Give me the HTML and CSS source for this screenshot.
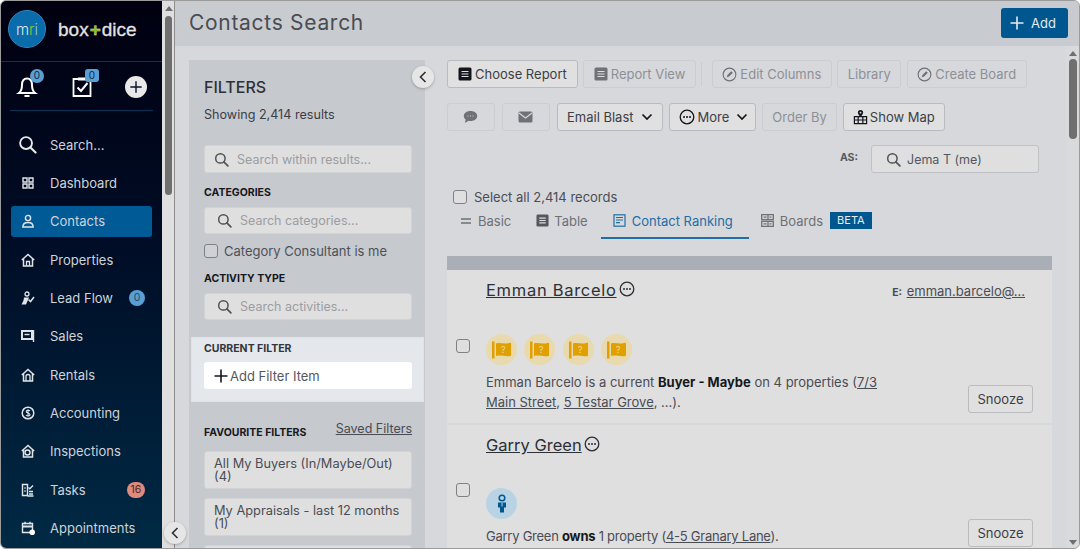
FILE: index.html
```html
<!DOCTYPE html>
<html lang="en">
<head>
  <meta charset="UTF-8">
  <title>Contacts Search</title>
  <link rel="stylesheet" href="styles.css">
</head>
<body>

  <svg class="sprite" xmlns="http://www.w3.org/2000/svg">
    <symbol id="i-search" viewBox="0 0 16 16"><circle cx="6.8" cy="6.8" r="5" fill="none" stroke="currentColor" stroke-width="1.6"/><path d="M10.5 10.5l4.3 4.3" stroke="currentColor" stroke-width="1.8" stroke-linecap="round"/></symbol>
    <symbol id="i-plus" viewBox="0 0 16 16"><path d="M8 1.5v13M1.5 8h13" stroke="currentColor" stroke-width="1.6"/></symbol>
    <symbol id="i-report" viewBox="0 0 14 14"><rect x="0.5" y="0.5" width="13" height="13" rx="1.5" fill="currentColor"/><path d="M3.5 4.500h7M3.5 7h7M3.5 9.500h7" stroke="#dcdde0" stroke-width="1.2"/></symbol>
    <symbol id="i-edit" viewBox="0 0 16 16"><circle cx="8" cy="8" r="6.8" fill="none" stroke="currentColor" stroke-width="1.2"/><path d="M5 11l.8-2.600 4-4 1.800 1.800-4 4z" fill="currentColor"/></symbol>
    <symbol id="i-more" viewBox="0 0 16 16"><circle cx="8" cy="8" r="6.800" fill="none" stroke="currentColor" stroke-width="1.300"/><circle cx="5" cy="8" r="1" fill="currentColor"/><circle cx="8" cy="8" r="1" fill="currentColor"/><circle cx="11" cy="8" r="1" fill="currentColor"/></symbol>
    <symbol id="i-chevron" viewBox="0 0 12 8"><path d="M1.500 1.500L6 6l4.500-4.500" fill="none" stroke="currentColor" stroke-width="1.700"/></symbol>
    <symbol id="i-back" viewBox="0 0 8 12"><path d="M6.500 1L1.500 6l5 5" fill="none" stroke="currentColor" stroke-width="1.600"/></symbol>
    <symbol id="i-flag" viewBox="0 0 19 18"><rect x="0" y="0.500" width="2.500" height="17" fill="currentColor"/><path d="M4 2.500c4-1.500 8 1 13-.5l2-.3v13c-5 1.500-9-1-15 .3z" fill="currentColor"/><text x="11.300" y="12" font-size="9.500" fill="#f0d890" text-anchor="middle" font-family="Inter, sans-serif">?</text></symbol>
  </svg>

  <div class="window">

    <aside class="sidebar">
      <div class="brand">
        <div class="brand-logo">m<span class="brand-r">r</span><span class="brand-i">i</span></div>
        <div class="brand-name">box<span class="brand-plus">+</span>dice</div>
      </div>

      <div class="quick">
        <div class="quick-item">
          <svg class="quick-icon" viewBox="0 0 24 24"><path d="M12 3.500c-3.500 0-5 3-5 6.500 0 4.500-1 6.500-3 8h16c-2-1.500-3-3.500-3-8 0-3.500-1.500-6.500-5-6.500z" fill="none" stroke="#fff" stroke-width="2"/><path d="M9.500 21h5" stroke="#fff" stroke-width="2"/></svg>
          <span class="quick-badge round">0</span>
        </div>
        <div class="quick-item">
          <svg class="quick-icon" viewBox="0 0 24 24"><path d="M8 4H3.500v17h17V4H16" fill="none" stroke="#fff" stroke-width="1.800"/><path d="M7.500 12.500l3.500 3.500 6.500-8" fill="none" stroke="#fff" stroke-width="2"/><rect x="8" y="2.500" width="8" height="3" fill="#fff"/></svg>
          <span class="quick-badge">0</span>
        </div>
        <div class="quick-add">
          <svg width="14" height="14"><use href="#i-plus"/></svg>
        </div>
      </div>

      <nav class="nav">
        <a class="nav-item">
          <svg class="nav-search" viewBox="0 0 16 16"><use href="#i-search"/></svg>
          <span>Search...</span>
        </a>
        <a class="nav-item">
          <svg class="nav-icon" viewBox="0 0 14 14"><path d="M2 2h4v4H2zM8 2h4v4H8zM2 8h4v4H2zM8 8h4v4H8z" fill="none" stroke="currentColor" stroke-width="1.400"/></svg>
          <span>Dashboard</span>
        </a>
        <a class="nav-item active">
          <svg class="nav-icon" viewBox="0 0 14 14"><circle cx="7" cy="4" r="2.600" fill="none" stroke="currentColor" stroke-width="1.400"/><path d="M1.800 13c0-3.200 1.600-4.500 5.200-4.500s5.200 1.300 5.200 4.500z" fill="none" stroke="currentColor" stroke-width="1.400"/></svg>
          <span>Contacts</span>
        </a>
        <a class="nav-item">
          <svg class="nav-icon" viewBox="0 0 14 14"><path d="M.8 7L7 1.500 13.200 7M2.500 6v7h9V6" fill="none" stroke="currentColor" stroke-width="1.500"/><path d="M5.500 13V8.500h3V13" fill="none" stroke="currentColor" stroke-width="1.300"/></svg>
          <span>Properties</span>
        </a>
        <a class="nav-item">
          <svg class="nav-icon" viewBox="0 0 14 14"><circle cx="6" cy="3" r="2" fill="none" stroke="currentColor" stroke-width="1.300"/><path d="M3 6.500h5L6.500 10 5 13.500H.5L2.500 9.500z" fill="currentColor"/><path d="M7.500 8.500l2 2 3.500-4.500" fill="none" stroke="currentColor" stroke-width="1.500"/></svg>
          <span>Lead Flow</span>
          <b class="nav-count blue">0</b>
        </a>
        <a class="nav-item">
          <svg class="nav-icon" viewBox="0 0 14 14"><path d="M1 2h10v8H1z" fill="none" stroke="currentColor" stroke-width="2"/><path d="M12.500 1v12" stroke="currentColor" stroke-width="1.400"/><path d="M3.500 5.500h5" stroke="currentColor" stroke-width="1.400"/></svg>
          <span>Sales</span>
        </a>
        <a class="nav-item">
          <svg class="nav-icon" viewBox="0 0 14 14"><path d="M.8 7L7 1.500 13.200 7M2.500 6v7h9V6" fill="none" stroke="currentColor" stroke-width="1.500"/><path d="M5 13V8.500a2 2 0 0 1 4 0V13" fill="none" stroke="currentColor" stroke-width="1.300"/></svg>
          <span>Rentals</span>
        </a>
        <a class="nav-item">
          <svg class="nav-icon" viewBox="0 0 14 14"><circle cx="7" cy="7" r="5.800" fill="none" stroke="currentColor" stroke-width="1.500"/><path d="M9 5c-.5-1-3.800-1.200-3.800.5S9 7 9 8.700 5.500 10 5 9M7 3.200v7.600" fill="none" stroke="currentColor" stroke-width="1.100"/></svg>
          <span>Accounting</span>
        </a>
        <a class="nav-item">
          <svg class="nav-icon" viewBox="0 0 14 14"><path d="M.8 7L7 1.500 13.200 7M2.500 6v7h9V6" fill="none" stroke="currentColor" stroke-width="1.500"/><circle cx="6.500" cy="8.500" r="2.500" fill="none" stroke="currentColor" stroke-width="1.400"/></svg>
          <span>Inspections</span>
        </a>
        <a class="nav-item">
          <svg class="nav-icon" viewBox="0 0 14 14"><path d="M1.500 1.500h5v11h-5z" fill="none" stroke="currentColor" stroke-width="1.400"/><path d="M6.500 13h6M7.500 4.500l1.300 1.300L12 2.500M8 8.500h4M8 11h4" fill="none" stroke="currentColor" stroke-width="1.300"/><path d="M3 5h2M3 8h2" stroke="currentColor" stroke-width="1.200"/></svg>
          <span>Tasks</span>
          <b class="nav-count red">16</b>
        </a>
        <a class="nav-item">
          <svg class="nav-icon" viewBox="0 0 14 14"><path d="M1.500 2.500h10v9h-10z" fill="none" stroke="currentColor" stroke-width="1.400"/><path d="M1.500 5.500h10" stroke="currentColor" stroke-width="1.800"/><path d="M4 .8v2.400M9 .8v2.400" stroke="currentColor" stroke-width="1.400"/><circle cx="11.200" cy="11.200" r="2.800" fill="#fff"/></svg>
          <span>Appointments</span>
        </a>
      </nav>
    </aside>

    <div class="side-scroll">
      <div class="arrow-up"></div>
      <div class="side-thumb"></div>
    </div>

    <main class="main">
      <header class="topbar">
        <h1>Contacts Search</h1>
        <button class="btn-add">
          <svg width="16" height="16"><use href="#i-plus"/></svg>
          Add
        </button>
      </header>

      <div class="content">

        <section class="filters">
          <div class="filters-top">
            <h2>FILTERS</h2>
            <p class="showing">Showing 2,414 results</p>

            <label class="search-box first">
              <svg width="15" height="15"><use href="#i-search"/></svg>
              Search within results...
            </label>

            <h4>CATEGORIES</h4>
            <label class="search-box inset">
              <svg width="15" height="15"><use href="#i-search"/></svg>
              Search categories...
            </label>
            <div class="check-row">
              <span class="check"></span>
              Category Consultant is me
            </div>

            <h4 class="activity">ACTIVITY TYPE</h4>
            <label class="search-box inset">
              <svg width="15" height="15"><use href="#i-search"/></svg>
              Search activities...
            </label>
          </div>

          <div class="current">
            <h4>CURRENT FILTER</h4>
            <div class="add-filter">
              <svg width="16" height="16"><use href="#i-plus"/></svg>
              Add Filter Item
            </div>
          </div>

          <div class="favourites">
            <div class="fav-head">
              <h4>FAVOURITE FILTERS</h4>
              <a>Saved Filters</a>
            </div>
            <div class="fav-item">All My Buyers (In/Maybe/Out) (4)</div>
            <div class="fav-item">My Appraisals - last 12 months (1)</div>
            <div class="fav-item"></div>
          </div>
        </section>

        <section class="results">
          <div class="toolbar">
            <button class="btn">
              <svg class="ic-dark" width="14" height="14"><use href="#i-report"/></svg>
              Choose Report
            </button>
            <button class="btn off">
              <svg width="14" height="14"><use href="#i-report"/></svg>
              Report View
            </button>
            <span class="tool-sep"></span>
            <button class="btn off">
              <svg width="15" height="15"><use href="#i-edit"/></svg>
              Edit Columns
            </button>
            <button class="btn off">Library</button>
            <button class="btn off">
              <svg width="15" height="15"><use href="#i-edit"/></svg>
              Create Board
            </button>
          </div>

          <div class="toolbar second">
            <button class="btn off icon-only">
              <svg width="15" height="14" viewBox="0 0 15 14"><path d="M7.500 1C3.500 1 .8 3.200.8 6c0 1.400.7 2.600 1.800 3.500L2 13l3.500-2.200c.6.100 1.300.2 2 .2 4 0 6.700-2.200 6.700-5S11.500 1 7.500 1z" fill="currentColor"/><path d="M4.500 6h1M7 6h1M9.500 6h1" stroke="#d6d8dc" stroke-width="1.200"/></svg>
            </button>
            <button class="btn off icon-only">
              <svg width="15" height="12" viewBox="0 0 15 12"><rect x="0.500" y="0.500" width="14" height="11" rx="1.500" fill="currentColor"/><path d="M1 2l6.500 5L14 2" fill="none" stroke="#d6d8dc" stroke-width="1.200"/></svg>
            </button>
            <button class="btn">
              Email Blast
              <svg class="chev" width="12" height="8"><use href="#i-chevron"/></svg>
            </button>
            <button class="btn btn-more">
              <svg class="ic-dark" width="16" height="16"><use href="#i-more"/></svg>
              More
              <svg class="chev" width="12" height="8"><use href="#i-chevron"/></svg>
            </button>
            <button class="btn off">Order By</button>
            <button class="btn btn-map">
              <svg class="ic-dark" width="15" height="16" viewBox="0 0 16 16"><path d="M1.500 7.500h13v7.500h-13zM1.500 11.200h13M5.500 7.500v7.500M10.500 7.500v7.500" fill="none" stroke="currentColor" stroke-width="1.300"/><path d="M8 .5a2.800 2.800 0 0 0-2.800 2.800C5.200 5.300 8 8 8 8s2.800-2.700 2.800-4.700A2.800 2.800 0 0 0 8 .5z" fill="currentColor"/><circle cx="8" cy="3.300" r="1" fill="#dcdde0"/></svg>
              Show Map
            </button>
          </div>

          <div class="as-row">
            <b>AS:</b>
            <label class="search-box as-box">
              <svg width="15" height="15"><use href="#i-search"/></svg>
              Jema T (me)
            </label>
          </div>

          <div class="select-all">
            <span class="check"></span>
            Select all 2,414 records
          </div>

          <div class="tabs">
            <a class="tab tab-basic">
              <svg width="10" height="6" viewBox="0 0 10 6"><path d="M0 1h10M0 5h10" stroke="currentColor" stroke-width="1.300"/></svg>
              Basic
            </a>
            <a class="tab tab-table">
              <svg class="ic-tab" width="13" height="13"><use href="#i-report"/></svg>
              Table
            </a>
            <a class="tab active">
              <svg width="13" height="13" viewBox="0 0 13 13"><rect x="1" y="0.800" width="11" height="11.400" fill="none" stroke="currentColor" stroke-width="1.200"/><path d="M3 3.500h7M3 6h7M3 8.700h4" stroke="currentColor" stroke-width="1.200"/></svg>
              Contact Ranking
            </a>
            <a class="tab tab-boards">
              <svg width="13" height="13" viewBox="0 0 13 13"><path d="M.7.700h11.600v5H.7zM.7 7.300h11.600v5H.7zM7 .7v5M7 7.300v5" fill="none" stroke="currentColor" stroke-width="1.300"/><path d="M2.500 3.200h3M2.500 9.800h3M8.500 3.200h2M8.500 9.800h2" stroke="currentColor" stroke-width="1.200"/></svg>
              Boards
              <span class="beta">BETA</span>
            </a>
          </div>

          <div class="list">
            <div class="list-head"></div>

            <article class="card">
              <div class="card-top">
                <div class="card-name wide">
                  <a>Emman Barcelo</a>
                  <svg width="16" height="16"><use href="#i-more"/></svg>
                </div>
                <div class="card-email"><b>E:</b> <a>emman.barcelo@...</a></div>
              </div>
              <div class="card-mid">
                <span class="check"></span>
                <div class="badges">
                  <span class="badge gold"><svg width="19" height="18"><use href="#i-flag"/></svg></span>
                  <span class="badge gold"><svg width="19" height="18"><use href="#i-flag"/></svg></span>
                  <span class="badge gold"><svg width="19" height="18"><use href="#i-flag"/></svg></span>
                  <span class="badge gold"><svg width="19" height="18"><use href="#i-flag"/></svg></span>
                </div>
              </div>
              <div class="card-foot">
                <p>Emman Barcelo is a current <b>Buyer - Maybe</b> on 4 properties (<a>7/3 Main Street</a>, <a>5 Testar Grove</a>, ...).</p>
                <button class="snooze">Snooze</button>
              </div>
            </article>

            <article class="card">
              <div class="card-top">
                <div class="card-name">
                  <a>Garry Green</a>
                  <svg width="16" height="16"><use href="#i-more"/></svg>
                </div>
              </div>
              <div class="card-mid second">
                <span class="check"></span>
                <div class="badges">
                  <span class="badge blue">
                    <svg width="12" height="20" viewBox="0 0 12 20"><circle cx="6" cy="4" r="2.800" fill="none" stroke="currentColor" stroke-width="1.500"/><path d="M2 8.500h8v5H8v5H4v-5H2z" fill="currentColor"/><path d="M6 8.500v4" stroke="#b8d4e4" stroke-width="1"/></svg>
                  </span>
                </div>
              </div>
              <div class="card-foot">
                <p class="tight">Garry Green <b>owns</b> 1 property (<a>4-5 Granary Lane</a>).</p>
                <button class="snooze">Snooze</button>
              </div>
            </article>
          </div>
        </section>

        <div class="main-scroll">
          <div class="arrow-up"></div>
          <div class="main-thumb"></div>
          <div class="arrow-down"></div>
        </div>
      </div>
    </main>

    <button class="collapse side-collapse"><svg width="8" height="12"><use href="#i-back"/></svg></button>
    <button class="collapse filter-collapse"><svg width="8" height="12"><use href="#i-back"/></svg></button>
  </div>

</body>
</html>
```

FILE: styles.css
```css
* {
  box-sizing: border-box;
}
html, body {
  margin: 0;
  height: 100%;
  overflow: hidden;
  background: #fff;
}
body {
  font-family: "Inter", "Open Sans", sans-serif;
  font-size: 13px;
  color: #3c3e45;
}
a {
  color: inherit;
}
button {
  font-family: inherit;
  font-size: 13px;
}
h1, h2, h4, p {
  margin: 0;
}
.sprite {
  display: none;
}

.window {
  position: relative;
  display: flex;
  height: 549px;
  border: 1px solid #9b9b9b;
  border-radius: 6px;
  overflow: hidden;
  background: #d6d8dc;
}

/* sidebar */
.sidebar {
  width: 161px;
  flex: none;
  background: linear-gradient(#000010 0%, #000d26 45%, #002a45 100%);
  color: #d4d7dc;
  overflow: hidden;
}
.brand {
  display: flex;
  align-items: center;
  gap: 12px;
  height: 61px;
  padding: 0 7px 4px;
  border-bottom: 1px solid #0b3358;
}
.brand-logo {
  width: 38px;
  height: 38px;
  flex: none;
  border-radius: 50%;
  background: #0a6cab;
  border: 1px solid #2f86bd;
  display: flex;
  align-items: center;
  justify-content: center;
  color: #dfe9ef;
  font-size: 15px;
  font-weight: 300;
}
.brand-r {
  color: #9cc23a;
}
.brand-i {
  color: #7fd0c8;
}
.brand-name {
  color: #e3e3e3;
  font-family: "Liberation Sans", sans-serif;
  font-size: 19px;
  padding-top: 2px;
  -webkit-text-stroke: 0.3px #e3e3e3;
}
.brand-plus {
  color: #8dba1f;
  font-weight: 700;
  margin: 0 1px;
}
.quick {
  display: flex;
  align-items: center;
  justify-content: space-between;
  width: 143px;
  height: 49px;
  margin: 0 9px;
  padding: 2px 6px 0 5px;
  border-bottom: 1px solid #0b3358;
}
.quick-item {
  position: relative;
  width: 24px;
  height: 24px;
}
.quick-icon {
  width: 24px;
  height: 24px;
  display: block;
}
.quick-badge {
  position: absolute;
  top: -6px;
  right: -5px;
  width: 14px;
  height: 13px;
  background: #5a9fd4;
  border-radius: 3px;
  color: #0d2a45;
  font-size: 10px;
  line-height: 13px;
  text-align: center;
}
.quick-badge.round {
  border-radius: 50%;
  height: 14px;
}
.quick-add {
  width: 22px;
  height: 22px;
  border-radius: 50%;
  background: #e9e9e9;
  color: #0a1128;
  display: flex;
  align-items: center;
  justify-content: center;
}
.nav {
  padding-top: 18px;
  display: flex;
  flex-direction: column;
  gap: 7.35px;
}
.nav-item {
  display: flex;
  align-items: center;
  height: 31px;
  margin: 0 10px;
  padding: 0 7px 0 10px;
  border-radius: 3px;
  font-size: 13px;
  color: #cfd3d9;
}
.nav-item span {
  flex: 1;
}
.nav-item.active {
  background: #005a96;
}
.nav-icon {
  width: 14px;
  height: 14px;
  margin-right: 15px;
  flex: none;
  color: #e2e5e8;
}
.nav-search {
  width: 19px;
  height: 19px;
  margin: 0 13px 0 -3px;
  color: #e8e8e8;
}
.nav-count {
  min-width: 16px;
  height: 16px;
  padding: 0 3px;
  border-radius: 8px;
  font-size: 10.5px;
  font-weight: 400;
  line-height: 16px;
  text-align: center;
}
.nav-count.blue {
  background: #5a9fd4;
  color: #20486b;
}
.nav-count.red {
  background: #df8a7f;
  color: #4c2522;
  min-width: 18px;
}

/* scrollbars */
.side-scroll {
  width: 13px;
  flex: none;
  background: #dfdfdf;
  border-right: 1px solid #8d8d8d;
  padding: 5px 0 0 3px;
}
.side-thumb {
  width: 7px;
  height: 179px;
  margin-top: 5px;
  border-radius: 4px;
  background: #6f6f6f;
}
.arrow-up {
  width: 0;
  border: 4px solid transparent;
  border-top: 0;
  border-bottom: 5px solid #6f6f6f;
  margin-left: -0.5px;
}
.arrow-down {
  width: 0;
  border: 4px solid transparent;
  border-bottom: 0;
  border-top: 5px solid #6f6f6f;
  margin: auto 0 3px 0;
}
.main-scroll {
  width: 14px;
  flex: none;
  margin-left: 14px;
  background: #d9dadc;
  padding: 5px 0 0 3px;
  display: flex;
  flex-direction: column;
}
.main-thumb {
  width: 8px;
  height: 80px;
  margin-top: 3px;
  border-radius: 4px;
  background: #6f6f6f;
}

/* main */
.main {
  flex: 1;
  min-width: 0;
  display: flex;
  flex-direction: column;
}
.topbar {
  height: 45px;
  flex: none;
  background: #c8cbcf;
  display: flex;
  align-items: center;
  justify-content: space-between;
  padding: 0 11px 2px 14px;
}
.topbar h1 {
  font-size: 21px;
  font-weight: 400;
  color: #494c52;
  letter-spacing: 0.7px;
}
.btn-add {
  width: 67px;
  height: 30px;
  display: flex;
  align-items: center;
  justify-content: center;
  gap: 6px;
  padding: 0 4px 0 0;
  background: #00578f;
  color: #e6ebef;
  border: none;
  border-radius: 3px;
}
.content {
  flex: 1;
  min-height: 0;
  display: flex;
  padding-left: 14px;
}

/* filters */
.filters {
  width: 236px;
  flex: none;
  margin-top: 14px;
  background: #c6c9ce;
}
.filters-top {
  padding: 17px 13px 17px 15px;
}
.filters h2 {
  font-size: 16px;
  font-weight: 500;
  color: #2e3038;
  line-height: 20px;
}
.showing {
  margin-top: 10px;
  font-size: 12.6px;
  line-height: 16px;
}
.search-box {
  display: flex;
  align-items: center;
  gap: 8px;
  height: 28px;
  padding-left: 9px;
  font-size: 12.5px;
  background: #dfdfdf;
  border: 1px solid #d2d3d5;
  border-radius: 3px;
  color: #9b9da1;
}
.search-box svg {
  color: #4f5157;
  flex: none;
}
.search-box.first {
  margin-top: 22px;
}
.search-box.inset {
  padding-left: 12px;
  height: 27px;
}
.filters h4 {
  font-size: 10.5px;
  font-weight: 700;
  color: #17181c;
  line-height: 13px;
}
.filters-top h4 {
  margin: 13px 0 8px;
}
.filters-top h4.activity {
  margin-top: 14px;
}
.check {
  display: inline-block;
  width: 14px;
  height: 14px;
  flex: none;
  border: 1px solid #7f8187;
  border-radius: 3px;
  background: #dfdfdf;
}
.filters .check {
  background: #cfd1d5;
}
.check-row {
  display: flex;
  align-items: center;
  gap: 6px;
  margin-top: 10px;
  height: 14px;
  color: #4f5158;
}
.current {
  margin: 0 1px 0 2px;
  height: 65px;
  padding: 4px 11px 0 12px;
  background: #e4e7ec;
  border: 1px solid #dfe2e6;
}
.current h4 {
  color: #33353b;
}
.add-filter {
  display: flex;
  align-items: center;
  gap: 1px;
  height: 27px;
  margin-top: 7px;
  padding-left: 9px;
  background: #fff;
  border-radius: 3px;
  color: #55575c;
}
.add-filter svg {
  color: #15161a;
}
.favourites {
  padding: 19px 13px 0 15px;
}
.fav-head {
  display: flex;
  justify-content: space-between;
  align-items: flex-end;
  margin-bottom: 12px;
}
.fav-head a {
  text-decoration: underline;
  font-size: 12.5px;
  color: #494b52;
  padding-bottom: 3px;
}
.fav-item {
  height: 38px;
  margin-bottom: 9px;
  padding: 6px 4px 0 9px;
  font-size: 12.8px;
  line-height: 12.5px;
  background: #dfdfdf;
  border: 1px solid #d2d3d5;
  border-radius: 3px;
  color: #4a4c53;
}

/* results */
.results {
  width: 605px;
  flex: none;
  margin-left: 22px;
  padding-top: 14px;
}
.toolbar {
  display: flex;
  align-items: center;
  gap: 5.5px;
  height: 28px;
}
.toolbar.second {
  margin-top: 15px;
  gap: 6px;
}
.btn {
  display: flex;
  align-items: center;
  gap: 3px;
  height: 28px;
  padding: 0 10px;
  background: #e0e0e0;
  border: 1px solid #b9bbbf;
  border-radius: 3px;
  color: #3c3e45;
  white-space: nowrap;
}
.btn.off {
  padding: 0 9.5px;
  background: transparent;
  border-color: #cbcdd1;
  color: #8e9095;
}
.btn.off svg {
  color: #6f7176;
}
.ic-dark {
  color: #14151c;
  flex: none;
}
.chev {
  color: #14151c;
  margin-left: 4px;
}
.toolbar.second .btn {
  padding: 0 9px;
}
.toolbar.second .btn.icon-only {
  width: 47.5px;
  margin-right: 1.5px;
  justify-content: center;
  padding: 0;
}
.toolbar.second .btn-more {
  padding-right: 7px;
}
.btn-map {
  gap: 2px;
}
.tool-sep {
  width: 1px;
  height: 24px;
  background: #cbcdd1;
  margin: 0 4px 0 0;
}
.as-row {
  display: flex;
  align-items: center;
  justify-content: flex-end;
  gap: 13px;
  margin-top: 14px;
  padding-right: 13px;
}
.as-row b {
  font-size: 10.5px;
  color: #55575d;
  margin-bottom: 3px;
}
.as-box {
  width: 168px;
  gap: 6px;
  padding-left: 14px;
  border-color: #bfc1c5;
  color: #55575d;
}
.select-all {
  display: flex;
  align-items: center;
  gap: 7px;
  margin: 17px 0 0 6px;
  height: 14px;
  color: #4b4d54;
}
.tabs {
  display: flex;
  align-items: center;
  height: 29px;
  margin-top: 6px;
  color: #6e7076;
}
.tab {
  display: flex;
  align-items: center;
  gap: 6px;
  height: 29px;
  padding: 0 13px 8px 14px;
}
.tab-basic {
  gap: 7px;
}
.tab-table {
  gap: 5px;
  padding-left: 12px;
}
.ic-tab {
  color: #55575d;
}
.tab.active {
  color: #1f6ea5;
  border-bottom: 2px solid #1f6ea5;
  padding: 0 16px 6px 12px;
}
.tab-boards {
  padding-left: 12px;
}
.beta {
  margin-left: 1px;
  padding: 0 7px;
  height: 17px;
  line-height: 17px;
  background: #00578f;
  color: #e6ebef;
  font-size: 11px;
}
.list {
  margin-top: 17px;
}
.list-head {
  height: 14px;
  background: #aaaeb6;
}
.card {
  display: flex;
  flex-direction: column;
  background: #dfdfdf;
  padding-left: 9px;
  padding-right: 19px;
  margin-bottom: 2px;
}
.card-top {
  display: flex;
  justify-content: space-between;
  padding: 10px 8px 0 30px;
  height: 46px;
}
.card-name {
  display: flex;
  align-items: flex-start;
  gap: 2px;
  font-size: 16.5px;
  line-height: 20px;
  color: #2d2f36;
}
.card-name.wide {
  letter-spacing: 0.7px;
}
.card-name a {
  text-decoration: underline;
}
.card-name svg {
  margin-top: 1px;
}
.card-email {
  font-size: 13px;
  line-height: 22px;
  color: #4a4c53;
}
.card-email b {
  font-size: 10.500px;
  margin-right: 1px;
}
.card-email a {
  text-decoration: underline;
}
.card-mid {
  display: flex;
  align-items: flex-start;
  gap: 16px;
  margin-top: 18px;
}
.card-mid .check {
  margin-top: 5px;
}
.card-mid.second {
  margin-top: 17px;
}
.card-mid.second .check {
  margin-top: -5px;
}
.badges {
  display: flex;
  gap: 7.300px;
}
.badge {
  width: 31px;
  height: 31px;
  border-radius: 50%;
  display: flex;
  align-items: center;
  justify-content: center;
}
.badge.gold {
  background: #e8d9af;
  color: #e0a000;
}
.badge.blue {
  background: #b8d4e4;
  color: #00578f;
}
.card-foot {
  display: flex;
  justify-content: space-between;
  align-items: flex-end;
  padding: 7px 0 11px 30px;
}
.card-foot p {
  width: 395px;
  line-height: 20px;
  color: #4a4c53;
}
.card-foot p.tight {
  letter-spacing: -0.25px;
}
.card-foot p b {
  color: #17181c;
}
.card-foot p a {
  text-decoration: underline;
}
.snooze {
  width: 65px;
  height: 28px;
  margin: -20px 0 -1px;
  background: #e0e0e0;
  border: 1px solid #b9bbbf;
  border-radius: 3px;
  color: #3c3e45;
}

/* collapse buttons over the panels */
.collapse {
  position: absolute;
  width: 22px;
  height: 22px;
  padding: 0;
  border: none;
  border-radius: 50%;
  background: #e6e6e6;
  box-shadow: 0 1px 3px rgba(0, 0, 0, 0.25);
  color: #2c2f38;
  display: flex;
  align-items: center;
  justify-content: center;
}
.side-collapse {
  left: 163px;
  top: 521px;
}
.filter-collapse {
  left: 411px;
  top: 65px;
}
```
